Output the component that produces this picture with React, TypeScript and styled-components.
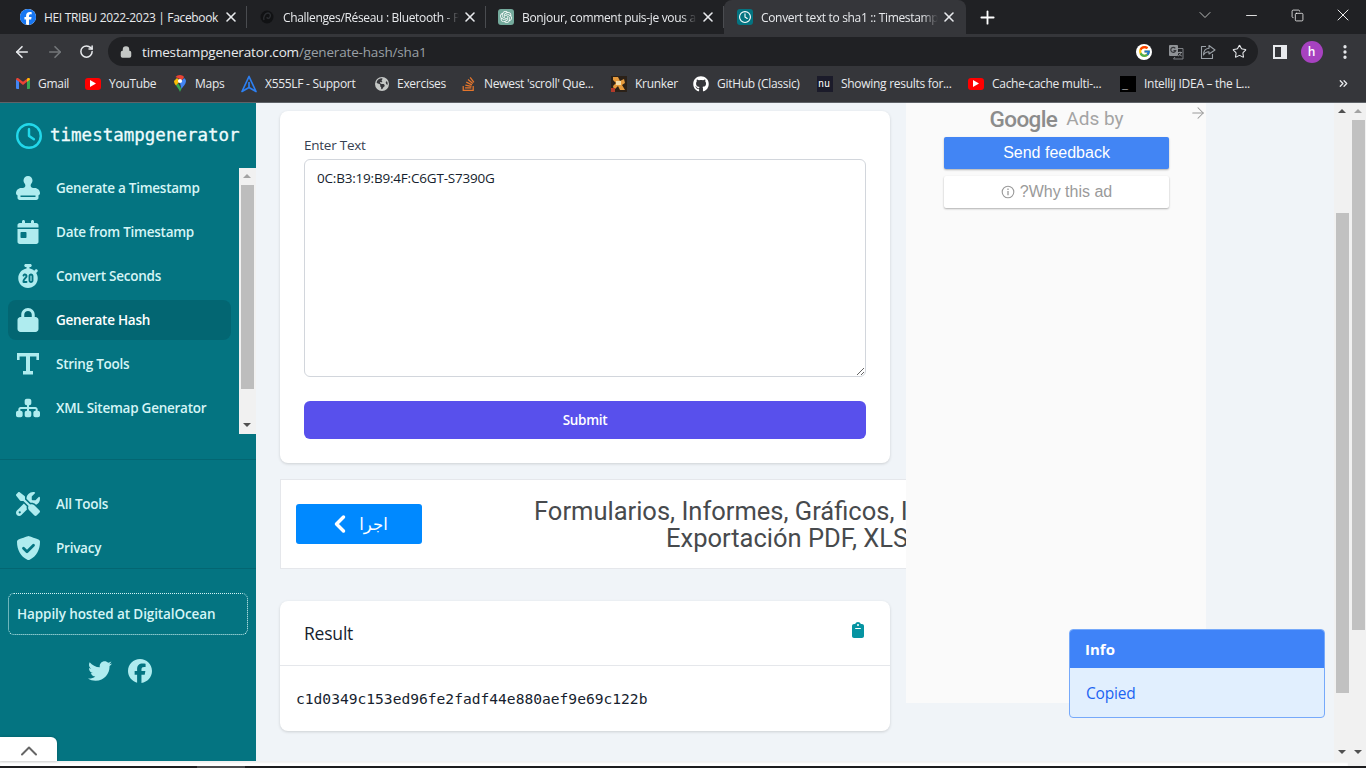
import React from "react"
import styled, { createGlobalStyle } from "styled-components"
import { ArrowLeft, ArrowRight, ChevronDown, ChevronLeft, ChevronsRight, Copy, Lock, Minus, MoreVertical, Plus, RotateCw, Star, X, ChevronUp } from "lucide-react"
import {
  FaCalendarDay,
  FaClipboard,
  FaEarthAmericas,
  FaFacebook,
  FaGithub,
  FaLock,
  FaRegClock,
  FaScrewdriverWrench,
  FaSitemap,
  FaStackOverflow,
  FaStamp,
  FaStopwatch20,
  FaTwitter,
} from "react-icons/fa6"
import { FcGoogle } from "react-icons/fc"
import { SiOpenai } from "react-icons/si"

const GlobalStyle = createGlobalStyle`
  html, body {
    margin: 0;
    padding: 0;
    background: #202124;
    overflow: hidden;
  }
  * {
    box-sizing: border-box;
  }
`

const UI_FONT = `"Open Sans", "Noto Sans", sans-serif`

const TIcon = () => (
  <svg width="22" height="22" viewBox="0 0 22 22" fill="currentColor">
    <path d="M0 0h22v7h-2.6V3.6H13V18h3v3.6H6V18h3V3.6H2.6V7H0z" />
  </svg>
)

const ShieldIcon = () => (
  <svg width="23" height="24" viewBox="0 0 23 24">
    <path
      fill="currentColor"
      d="M11.5 0c.5 0 9.2 3.2 10 3.6.9.5 1.5 1.2 1.5 2.2 0 8-3.6 14.8-10.3 17.9-.8.4-1.6.4-2.4 0C3.6 20.6 0 13.8 0 5.8c0-1 .6-1.7 1.5-2.2C2.3 3.2 11 0 11.5 0z"
    />
    <path fill="none" stroke="#047481" strokeWidth="2.8" strokeLinecap="round" strokeLinejoin="round" d="M6.5 12.2l3.5 3.5 6.5-6.5" />
  </svg>
)

const GmailIcon = () => (
  <svg width="14" height="11" viewBox="0 0 14 11">
    <path fill="#4285f4" d="M0 1.5h3V11H1a1 1 0 0 1-1-1z" />
    <path fill="#34a853" d="M11 1.5h3V10a1 1 0 0 1-1 1h-2z" />
    <path fill="#ea4335" d="M0 1.5C0 .3 1.3-.4 2.3.3L7 3.8 11.7.3c1-.7 2.3 0 2.3 1.2l-3 2.3L7 7 3 3.8z" />
    <path fill="#fbbc04" d="M11 1l.7-.7c1-.7 2.3 0 2.3 1.2L11 3.8z" />
  </svg>
)

const MapsIcon = () => (
  <svg width="12" height="17" viewBox="0 0 12 17">
    <path fill="#34a853" d="M2 10.5C3.5 12.5 5 14 6 17c.3-1 .8-2 1.5-3L4 8z" />
    <path fill="#fbbc04" d="M0 6c0 1.8.9 3.3 2 4.5L6 6 3 3z" />
    <path fill="#4285f4" d="M12 6c0 3-3 5.5-4.5 8L6 8l4-5c1.3 1 2 1.8 2 3z" />
    <path fill="#ea4335" d="M1.5 2C2.5.8 4.2 0 6 0c1.7 0 3.1.7 4.2 2L8 5z" />
    <circle cx="6" cy="6" r="2.1" fill="#fff" />
  </svg>
)

const AsusIcon = () => (
  <svg width="16" height="18" viewBox="0 0 16 18" fill="none" stroke="#2d7ff0" strokeWidth="1.7" strokeLinejoin="round">
    <path d="M8 1.5L1 16.5l7-4 7 4z" />
    <path d="M8 7v5.5" />
  </svg>
)

const KrunkerIcon = () => (
  <svg width="16" height="16" viewBox="0 0 16 16">
    <rect width="16" height="16" fill="#2b2118" />
    <path fill="#e59a3c" d="M2 1h5l2 4 4-2 1 4-3 2 3 5H9L7 10l-4 4-1-4 3-3-3-3z" />
    <path fill="#f4dca8" d="M5 5h5v4H5z" />
    <path fill="#b33a2a" d="M0 12h4v4H0z" />
  </svg>
)

const TranslateIcon = () => (
  <svg width="16" height="16" viewBox="0 0 16 16">
    <path fill="none" stroke="#7d8084" strokeWidth="1" d="M7 4.5h8v10.5H5.5L7 13" />
    <rect x="1" y="1" width="9" height="11" rx="1" fill="#8f9296" />
    <path fill="none" stroke="#35363a" strokeWidth="1.2" d="M7.3 4.3a2.5 2.5 0 1 0 .4 2.3H5.5" />
    <path fill="none" stroke="#8f9296" strokeWidth="1" d="M10 8.5h4M12 7.5v1M13 8.5c-.4 2-1.8 3-3 3.5M10.8 9.5c.5 1 1.5 2 3 2.5" />
  </svg>
)

const ShareIcon = () => (
  <svg width="16" height="16" viewBox="0 0 16 16" fill="none" stroke="#9aa0a6" strokeWidth="1.1" strokeLinejoin="round">
    <path d="M9 1.5l6 4.5-6 4V7.8C6 7.8 4.5 9 3.5 11 3.5 7 5.5 4.5 9 4.2z" />
    <path d="M6 2.5H1.5v12h11V10" />
  </svg>
)

const PanelIcon = () => (
  <svg width="14" height="14" viewBox="0 0 14 14">
    <path fill="#e8eaed" fillRule="evenodd" d="M0 0h14v14H0zM2 2v10h6V2z" />
  </svg>
)

const InfoGlyph = () => (
  <svg width="14" height="14" viewBox="0 0 14 14" fill="none" stroke="#9a9a9a">
    <circle cx="7" cy="7" r="5.8" strokeWidth="1.1" />
    <path d="M7 6v4.2M7 3.6v1.3" strokeWidth="1.3" />
  </svg>
)

const DarkSwirl = () => (
  <svg width="16" height="16" viewBox="0 0 16 16" fill="none">
    <circle cx="8" cy="8" r="6.5" fill="#111214" />
    <path d="M5 11c-1-3 1-7 4-7 2 0 3 2 2 4s-3 2-3 0" stroke="#2b2d31" strokeWidth="1.4" />
  </svg>
)

const tabs = [
  { title: "HEI TRIBU 2022-2023 | Facebook", icon: "fb", width: 239, fade: false },
  { title: "Challenges/Réseau : Bluetooth - Pairing", icon: "dark", width: 239, fade: true },
  { title: "Bonjour, comment puis-je vous aider ?", icon: "gpt", width: 238, fade: true },
]

const YoutubeGlyph = () => (
  <YtBox>
    <svg width="6" height="7" viewBox="0 0 6 7">
      <path fill="#fff" d="M0 0l6 3.5L0 7z" />
    </svg>
  </YtBox>
)

const FakeScrollbar = ({ top, height, dark }: { top: number; height: number; dark?: boolean }) => (
  <ScrollTrack>
    <ArrowUp $dark={dark} />
    <ThumbArea>
      <Thumb style={{ marginTop: top, height }} />
    </ThumbArea>
    <ArrowDown />
  </ScrollTrack>
)

const App = () => {
  const bookmarks = [
    { label: "Gmail", width: 69, cell: 14, icon: <GmailIcon /> },
    { label: "YouTube", width: 87, cell: 16, icon: <YoutubeGlyph /> },
    { label: "Maps", width: 69, cell: 15, icon: <MapsIcon /> },
    { label: "X555LF - Support", width: 133, cell: 16, icon: <AsusIcon /> },
    { label: "Exercises", width: 87, cell: 15, icon: <FaEarthAmericas size={14} color="#c4c7c5" /> },
    { label: "Newest 'scroll' Que...", width: 150, cell: 15, icon: <FaStackOverflow size={16} color="#e5762c" /> },
    { label: "Krunker", width: 82, cell: 16, icon: <KrunkerIcon /> },
    { label: "GitHub (Classic)", width: 124, cell: 16, icon: <FaGithub size={16} color="#ffffff" /> },
    { label: "Showing results for...", width: 151, cell: 16, icon: <BlackSquare $nu>nu</BlackSquare> },
    { label: "Cache-cache multi-...", width: 152, cell: 16, icon: <YoutubeGlyph /> },
    { label: "IntelliJ IDEA – the L...", width: 217, cell: 16, icon: <BlackSquare>_</BlackSquare> },
  ]
  const menuItems = [
    { label: "Generate a Timestamp", icon: <FaStamp size={24} /> },
    { label: "Date from Timestamp", icon: <FaCalendarDay size={24} /> },
    { label: "Convert Seconds", icon: <FaStopwatch20 size={24} /> },
    { label: "Generate Hash", icon: <FaLock size={24} />, active: true },
    { label: "String Tools", icon: <TIcon /> },
    { label: "XML Sitemap Generator", icon: <FaSitemap size={24} /> },
  ]
  return (
    <Screen>
      <GlobalStyle />
      <TabStrip>
        <TabList>
          {tabs.map((t) => (
            <Tab key={t.title} $width={t.width}>
              <TabIcon $kind={t.icon}>
                {t.icon === "fb" && <FaFacebook size={16} color="#1877f2" />}
                {t.icon === "dark" && <DarkSwirl />}
                {t.icon === "gpt" && <SiOpenai size={12} color="#fff" />}
              </TabIcon>
              <TabTitle $fade={t.fade}>{t.title}</TabTitle>
              <CloseCell>
                <X size={16} strokeWidth={2.4} color="#e8eaed" />
              </CloseCell>
            </Tab>
          ))}
          <ActiveTab>
            <TabIcon $kind="clock">
              <FaRegClock size={12} color="#fff" />
            </TabIcon>
            <TabTitle $fade>Convert text to sha1 :: Timestamp Generator</TabTitle>
            <CloseCell>
              <X size={16} strokeWidth={2.4} color="#e8eaed" />
            </CloseCell>
          </ActiveTab>
          <NewTab>
            <Plus size={21} strokeWidth={2.1} color="#fff" />
          </NewTab>
        </TabList>
        <WindowControls>
          <ChevronDown size={20} strokeWidth={1.1} color="#c4c7c5" />
          <Minus size={17} strokeWidth={1.2} color="#fff" />
          <Copy size={13} strokeWidth={1.4} color="#fff" />
          <X size={20} strokeWidth={1.1} color="#fff" />
        </WindowControls>
      </TabStrip>

      <Toolbar>
        <NavButtons>
          <ArrowLeft size={18} strokeWidth={2.2} color="#e8eaed" />
          <ArrowRight size={18} strokeWidth={2.2} color="#74777a" />
          <RotateCw size={15} strokeWidth={2.4} color="#e8eaed" />
        </NavButtons>
        <UrlBar>
          <Lock size={12} strokeWidth={3} color="#c4c7c5" fill="#c4c7c5" />
          <UrlText>
            timestampgenerator.com<UrlPath>/generate-hash/sha1</UrlPath>
          </UrlText>
          <UrlActions>
            <GoogleDot>
              <FcGoogle size={13} />
            </GoogleDot>
            <TranslateIcon />
            <ShareIcon />
            <Star size={15} strokeWidth={1.7} color="#e8eaed" />
          </UrlActions>
        </UrlBar>
        <ToolbarEnd>
          <PanelIcon />
          <Avatar>h</Avatar>
          <MoreVertical size={18} strokeWidth={2.4} color="#e8eaed" />
        </ToolbarEnd>
      </Toolbar>

      <BookmarkBar>
        {bookmarks.map((b, i) => (
          <Bookmark key={i} $width={b.width}>
            <BookmarkIcon $cell={b.cell}>{b.icon}</BookmarkIcon>
            <BookmarkLabel>{b.label}</BookmarkLabel>
          </Bookmark>
        ))}
        <MoreBookmarks>
          <ChevronsRight size={13} strokeWidth={2.4} color="#e8eaed" />
        </MoreBookmarks>
      </BookmarkBar>

      <Viewport>
        <Sidebar>
          <Brand>
            <BrandClock>
              <FaRegClock size={26} />
            </BrandClock>
            <BrandName>timestampgenerator</BrandName>
          </Brand>
          <MenuScroller>
            <MenuList>
              {menuItems.map((m) => (
                <MenuItem key={m.label} $active={m.active}>
                  <MenuIcon>{m.icon}</MenuIcon>
                  <MenuLabel $active={m.active}>{m.label}</MenuLabel>
                </MenuItem>
              ))}
            </MenuList>
            <SideScroll>
              <ArrowUp />
              <ThumbArea>
                <SideThumb />
              </ThumbArea>
              <ArrowDown />
            </SideScroll>
          </MenuScroller>
          <SecondaryMenu>
            <MenuItem>
              <MenuIcon>
                <FaScrewdriverWrench size={24} />
              </MenuIcon>
              <MenuLabel>All Tools</MenuLabel>
            </MenuItem>
            <MenuItem>
              <MenuIcon>
                <ShieldIcon />
              </MenuIcon>
              <MenuLabel>Privacy</MenuLabel>
            </MenuItem>
          </SecondaryMenu>
          <HostBox>Happily hosted at DigitalOcean</HostBox>
          <Socials>
            <FaTwitter size={24} />
            <FaFacebook size={24} />
          </Socials>
          <BackToTop>
            <ChevronUp size={28} strokeWidth={1.7} color="#666" />
          </BackToTop>
        </Sidebar>

        <Content>
          <FormCard>
            <FieldLabel>Enter Text</FieldLabel>
            <TextArea readOnly value="0C:B3:19:B9:4F:C6GT-S7390G" />
            <SubmitButton>Submit</SubmitButton>
          </FormCard>

          <AdBanner>
            <AdCta>
              <ChevronLeft size={28} strokeWidth={3} />
              <span>اجرا</span>
            </AdCta>
            <AdCopy>
              <AdLine $indent={534}>Formularios, Informes, Gráficos, I</AdLine>
              <AdLine $indent={666}>Exportación PDF, XLS</AdLine>
            </AdCopy>
          </AdBanner>

          <ResultCard>
            <ResultHead>
              <ResultTitle>Result</ResultTitle>
              <FaClipboard size={16} color="#0694a2" />
            </ResultHead>
            <ResultBody>c1d0349c153ed96fe2fadf44e880aef9e69c122b</ResultBody>
          </ResultCard>
        </Content>

        <AdSide>
          <AdHeader>
            <GoogleWord>Google</GoogleWord>
            <AdsBy>Ads by</AdsBy>
            <AdArrow>
              <ArrowRight size={18} strokeWidth={1.4} color="#999" />
            </AdArrow>
          </AdHeader>
          <FeedbackButton>Send feedback</FeedbackButton>
          <WhyButton>
            <InfoGlyph />
            ?Why this ad
          </WhyButton>
        </AdSide>

        <Gutter />
        <FakeScrollbar top={93} height={480} dark />
        <FakeScrollbar top={0} height={510} />

        <Toast>
          <ToastHead>Info</ToastHead>
          <ToastBody>Copied</ToastBody>
        </Toast>
      </Viewport>

      <BottomStrip>
        <BottomWhite />
        <BottomGrey />
      </BottomStrip>
      <Taskbar>
        <TaskbarActive />
      </Taskbar>
    </Screen>
  )
}
export default App

const Screen = styled.div`
  width: 1366px;
  height: 768px;
  display: flex;
  flex-direction: column;
  overflow: hidden;
  font-family: ${UI_FONT};
`
const TabStrip = styled.div`
  height: 34px;
  background: #202124;
  display: flex;
  justify-content: space-between;
`
const TabList = styled.div`
  display: flex;
  padding-left: 8px;
`
const Tab = styled.div<{ $width: number }>`
  width: ${(p) => p.$width}px;
  display: flex;
  align-items: center;
  padding: 0 6px 0 12px;
  color: #e8eaed;
  border-right: 1px solid #4a4c50;
  height: 22px;
  margin-top: 6px;
`
const ActiveTab = styled.div`
  width: 242px;
  height: 34px;
  display: flex;
  align-items: center;
  padding: 0 8px 0 13px;
  color: #e8eaed;
  background: #35363a;
  border-radius: 8px 8px 0 0;
`
const TabIcon = styled.span<{ $kind: string }>`
  width: 16px;
  height: 16px;
  flex: none;
  margin-right: 8px;
  display: flex;
  align-items: center;
  justify-content: center;
  border-radius: ${(p) => (p.$kind === "fb" ? "50%" : "3px")};
  background: ${(p) => (p.$kind === "fb" ? "#fff" : p.$kind === "gpt" ? "#74aa9c" : p.$kind === "clock" ? "#047481" : "transparent")};
`
const TabTitle = styled.span<{ $fade?: boolean }>`
  flex: 1;
  min-width: 0;
  overflow: hidden;
  white-space: nowrap;
  font-size: 12px;
  letter-spacing: -0.33px;
  margin-right: 2px;
  ${(p) => p.$fade && "-webkit-mask-image: linear-gradient(to left, transparent 0, #000 16px);"}
`
const CloseCell = styled.span`
  width: 18px;
  height: 18px;
  flex: none;
  display: flex;
  align-items: center;
  justify-content: center;
`
const NewTab = styled.div`
  width: 42px;
  display: flex;
  align-items: center;
  justify-content: center;
`
const WindowControls = styled.div`
  width: 184px;
  display: grid;
  grid-template-columns: repeat(4, 46px);
  align-items: center;
  justify-items: center;
  padding-bottom: 4px;
`
const Toolbar = styled.div`
  height: 33px;
  padding-top: 2px;
  background: #35363a;
  display: flex;
  align-items: center;
`
const NavButtons = styled.div`
  width: 108px;
  padding: 0 14px 0 13px;
  display: flex;
  justify-content: space-between;
  align-items: center;
`
const UrlBar = styled.div`
  width: 1150px;
  height: 29px;
  border-radius: 15px;
  background: #202124;
  display: flex;
  align-items: center;
  padding: 0 11px 0 12px;
`
const UrlText = styled.div`
  margin-left: 10px;
  flex: 1;
  font-size: 13.5px;
  letter-spacing: -0.17px;
  color: #e8eaed;
`
const UrlPath = styled.span`
  color: #9aa0a6;
`
const UrlActions = styled.div`
  display: flex;
  align-items: center;
  gap: 16px;
`
const GoogleDot = styled.span`
  width: 16px;
  height: 16px;
  border-radius: 50%;
  background: #fff;
  display: flex;
  align-items: center;
  justify-content: center;
`
const ToolbarEnd = styled.div`
  flex: 1;
  display: flex;
  align-items: center;
  justify-content: space-between;
  padding: 0 12px 0 15px;
`
const Avatar = styled.span`
  width: 22px;
  height: 22px;
  border-radius: 50%;
  background: #a742c0;
  color: #fff;
  font-size: 12px;
  font-weight: 600;
  display: flex;
  align-items: center;
  justify-content: center;
`
const BookmarkBar = styled.div`
  height: 36px;
  background: #35363a;
  border-bottom: 1px solid #5f6368;
  padding: 0 0 2px 16px;
  display: flex;
  align-items: center;
`
const Bookmark = styled.div<{ $width: number }>`
  width: ${(p) => p.$width}px;
  flex: none;
  display: flex;
  align-items: center;
`
const BookmarkIcon = styled.span<{ $cell: number }>`
  width: ${(p) => p.$cell}px;
  height: 16px;
  margin-right: 8px;
  flex: none;
  display: flex;
  align-items: center;
  justify-content: center;
`
const BookmarkLabel = styled.span`
  font-size: 12px;
  letter-spacing: -0.29px;
  color: #e8eaed;
  white-space: nowrap;
`
const MoreBookmarks = styled.span`
  display: flex;
  align-items: center;
`
const YtBox = styled.span`
  width: 16px;
  height: 12px;
  border-radius: 3px;
  background: #f00;
  display: flex;
  align-items: center;
  justify-content: center;
`
const BlackSquare = styled.span<{ $nu?: boolean }>`
  width: 16px;
  height: 16px;
  background: ${(p) => (p.$nu ? "#1b1b2a" : "#000")};
  color: #fff;
  font-family: "DejaVu Sans Mono", monospace;
  font-size: 10px;
  line-height: 15px;
  padding-left: ${(p) => (p.$nu ? "1px" : "2px")};
`
const Viewport = styled.div`
  position: relative;
  height: 658px;
  display: flex;
  background: #f0f4f8;
`
const Sidebar = styled.aside`
  position: relative;
  width: 256px;
  flex: none;
  background: #047481;
  display: flex;
  flex-direction: column;
`
const Brand = styled.div`
  height: 65px;
  display: flex;
  align-items: center;
  padding: 0 0 0 16px;
  flex: none;
`
const BrandClock = styled.span`
  color: #22d8ea;
  display: flex;
  margin-right: 8px;
`
const BrandName = styled.span`
  font-family: "DejaVu Sans Mono", monospace;
  font-size: 17.5px;
  color: #eefcfd;
  -webkit-text-stroke: 0.3px #eefcfd;
  margin-top: -1px;
`
const MenuScroller = styled.div`
  height: 266px;
  display: flex;
  flex: none;
  justify-content: space-between;
`
const MenuList = styled.div`
  width: 223px;
  margin: -2px 0 0 8px;
`
const MenuItem = styled.div<{ $active?: boolean }>`
  height: 44px;
  display: flex;
  align-items: center;
  padding-left: 8px;
  position: relative;
  &::before {
    content: "";
    position: absolute;
    left: 0;
    right: 0;
    top: 2px;
    bottom: 2px;
    border-radius: 8px;
    background: ${(p) => (p.$active ? "#036672" : "transparent")};
  }
`
const MenuIcon = styled.span`
  position: relative;
  width: 24px;
  height: 24px;
  margin-right: 16px;
  color: #afecef;
  display: flex;
  align-items: center;
  justify-content: center;
`
const MenuLabel = styled.span<{ $active?: boolean }>`
  position: relative;
  font-size: 13.5px;
  font-weight: 600;
  letter-spacing: -0.25px;
  color: ${(p) => (p.$active ? "#ffffff" : "#d5f5f6")};
`
const SideScroll = styled.div`
  width: 17px;
  background: #f1f1f1;
  display: flex;
  flex-direction: column;
`
const SideThumb = styled.div`
  width: 13px;
  height: 204px;
  margin: 0 auto;
  background: #bdbdbd;
`
const SecondaryMenu = styled.div`
  margin-top: 25px;
  padding: 22px 8px 0;
  height: 110px;
  border-top: 1px solid #036672;
  border-bottom: 1px solid #036672;
  flex: none;
`
const HostBox = styled.div`
  margin: 24px 8px 0;
  height: 42px;
  padding: 0 8px;
  display: flex;
  align-items: center;
  border: 1px dotted #d5f5f6;
  border-radius: 6px;
  font-size: 13.5px;
  font-weight: 600;
  letter-spacing: -0.1px;
  color: #d5f5f6;
`
const Socials = styled.div`
  margin-top: 24px;
  padding-right: 16px;
  display: flex;
  justify-content: center;
  gap: 16px;
  color: #afecef;
`
const BackToTop = styled.div`
  position: absolute;
  left: 0;
  bottom: 0;
  width: 57px;
  height: 24px;
  padding-top: 3px;
  background: #fff;
  border-radius: 0 6px 0 0;
  box-shadow: 0 0 3px rgba(0, 0, 0, 0.25);
  display: flex;
  align-items: center;
  justify-content: center;
`
const Content = styled.main`
  width: 650px;
  flex: none;
  padding: 8px 0 0 24px;
  overflow: hidden;
`
const FormCard = styled.section`
  width: 610px;
  height: 352px;
  padding: 24px;
  background: #fff;
  border-radius: 8px;
  box-shadow: 0 1px 3px rgba(0, 0, 0, 0.15);
`
const FieldLabel = styled.label`
  display: block;
  font-size: 13.5px;
  font-weight: 500;
  line-height: 20px;
  letter-spacing: -0.25px;
  color: #374151;
`
const TextArea = styled.textarea`
  display: block;
  width: 562px;
  height: 218px;
  margin-top: 4px;
  padding: 8px 12px;
  border: 1px solid #d2d6dc;
  border-radius: 6px;
  background: #fff;
  font-family: ${UI_FONT};
  font-size: 13.5px;
  line-height: 20px;
  letter-spacing: -0.2px;
  color: #161e2e;
  outline: none;
`
const SubmitButton = styled.button`
  display: block;
  width: 562px;
  height: 38px;
  margin-top: 24px;
  border: none;
  border-radius: 6px;
  background: #5850ec;
  color: #fff;
  font-family: ${UI_FONT};
  font-size: 13.5px;
  font-weight: 600;
  letter-spacing: -0.3px;
`
const AdBanner = styled.section`
  width: 626px;
  height: 90px;
  margin-top: 16px;
  background: #fff;
  border: 1px solid #e5e7eb;
  border-right: none;
  display: flex;
  align-items: center;
  position: relative;
  overflow: hidden;
`
const AdCta = styled.div`
  width: 126px;
  height: 40px;
  margin-left: 15px;
  padding-right: 4px;
  flex: none;
  background: #0089ff;
  border-radius: 3px;
  color: #fff;
  display: flex;
  align-items: center;
  justify-content: center;
  gap: 5px;
  font-family: "DejaVu Sans", sans-serif;
  font-size: 16.5px;
`
const AdCopy = styled.div`
  position: absolute;
  left: 0;
  top: 18px;
  width: 700px;
`
const AdLine = styled.div<{ $indent: number }>`
  padding-left: ${(p) => p.$indent - 281}px;
  font-family: Roboto, sans-serif;
  font-size: 25.5px;
  line-height: 27px;
  color: #474a4d;
  white-space: nowrap;
`
const ResultCard = styled.section`
  width: 610px;
  height: 130px;
  margin-top: 32px;
  background: #fff;
  border-radius: 8px;
  box-shadow: 0 1px 3px rgba(0, 0, 0, 0.15);
`
const ResultHead = styled.div`
  height: 65px;
  padding: 21px 24px 0 24px;
  display: flex;
  justify-content: space-between;
  align-items: flex-start;
  border-bottom: 1px solid #e5e7eb;
`
const ResultTitle = styled.div`
  font-size: 17.5px;
  font-weight: 500;
  line-height: 22px;
  letter-spacing: -0.2px;
  color: #161e2e;
`
const ResultBody = styled.div`
  padding: 23px 16px;
  font-family: "DejaVu Sans Mono", monospace;
  font-size: 14.6px;
  line-height: 20px;
  color: #161e2e;
`
const AdSide = styled.aside`
  width: 300px;
  height: 600px;
  flex: none;
  background: #fafafa;
  padding: 0 37px 0 38px;
  position: relative;
`
const AdHeader = styled.div`
  height: 34px;
  display: flex;
  align-items: center;
  justify-content: center;
  gap: 9px;
  padding-bottom: 3px;
`
const GoogleWord = styled.span`
  font-family: Roboto, sans-serif;
  font-size: 22.5px;
  font-weight: 500;
  letter-spacing: -0.6px;
  color: #8c8c8c;
`
const AdsBy = styled.span`
  font-family: Roboto, sans-serif;
  font-size: 19px;
  color: #a4a4a4;
`
const AdArrow = styled.span`
  position: absolute;
  top: 1px;
  right: -1px;
  display: flex;
`
const FeedbackButton = styled.div`
  height: 32px;
  border-radius: 2px;
  background: #4285f4;
  color: #fff;
  display: flex;
  align-items: center;
  justify-content: center;
  font-family: "Liberation Sans", Arial, sans-serif;
  font-size: 16px;
  box-shadow: 0 1px 2px rgba(0, 0, 0, 0.3);
`
const WhyButton = styled.div`
  height: 32px;
  margin-top: 7px;
  border-radius: 2px;
  background: #fff;
  color: #9a9a9a;
  display: flex;
  align-items: center;
  justify-content: center;
  gap: 5px;
  font-family: "Liberation Sans", Arial, sans-serif;
  font-size: 16px;
  box-shadow: 0 1px 2px rgba(0, 0, 0, 0.3);
`
const Gutter = styled.div`
  flex: 1;
`
const ScrollTrack = styled.div`
  width: 16px;
  flex: none;
  background: #f1f1f1;
  display: flex;
  flex-direction: column;
`
const ThumbArea = styled.div`
  flex: 1;
  min-height: 0;
  display: flex;
  flex-direction: column;
`
const Thumb = styled.div`
  width: 13px;
  margin: 0 auto;
  background: #c1c1c1;
  flex: none;
`
const ArrowUp = styled.div<{ $dark?: boolean }>`
  height: 17px;
  flex: none;
  position: relative;
  &::after {
    content: "";
    position: absolute;
    left: 3.5px;
    top: 6px;
    border-left: 4.5px solid transparent;
    border-right: 4.5px solid transparent;
    border-bottom: 4.5px solid ${(p) => (p.$dark ? "#505050" : "#a3a3a3")};
  }
`
const ArrowDown = styled.div`
  height: 17px;
  flex: none;
  position: relative;
  &::after {
    content: "";
    position: absolute;
    left: 3.5px;
    top: 6px;
    border-left: 4.5px solid transparent;
    border-right: 4.5px solid transparent;
    border-top: 4.5px solid #505050;
  }
`
const Toast = styled.div`
  position: absolute;
  left: 1069px;
  top: 526px;
  width: 256px;
  height: 89px;
  border: 1px solid #76a9fa;
  border-radius: 4px;
  background: #e1effe;
  overflow: hidden;
`
const ToastHead = styled.div`
  height: 39px;
  margin: -1px -1px 0;
  padding: 0 16px;
  background: #3f83f8;
  color: #fff;
  font-family: ${UI_FONT};
  font-size: 15px;
  font-weight: 700;
  display: flex;
  align-items: center;
`
const ToastBody = styled.div`
  padding: 15px 16px;
  color: #1c64f2;
  font-size: 15.5px;
  line-height: 20px;
  letter-spacing: -0.2px;
`
const BottomStrip = styled.div`
  height: 5px;
  flex: none;
  display: flex;
`
const BottomWhite = styled.div`
  flex: 1;
  background: #fff;
  box-shadow: inset 0 2px 2px rgba(0, 0, 0, 0.06);
`
const BottomGrey = styled.div`
  width: 18px;
  background: #f1f1f1;
`
const Taskbar = styled.div`
  flex: 1;
  background: #1d1d1f;
  padding-left: 197px;
`
const TaskbarActive = styled.div`
  width: 48px;
  height: 100%;
  background: #4a4a4c;
`
